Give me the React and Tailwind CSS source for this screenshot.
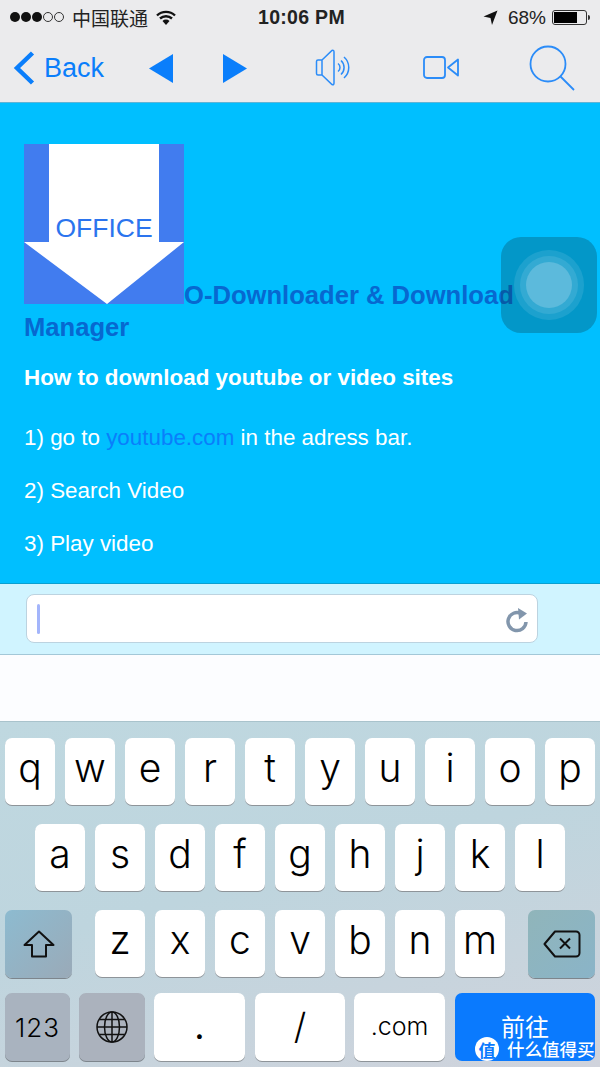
const sans = { fontFamily: '"Liberation Sans", Arial, sans-serif' };
const cjk = { fontFamily: '"Noto Sans CJK SC", sans-serif' };
const keyFont = { fontFamily: 'Inter, sans-serif' };

function Key({ label }) {
  return (
    <div className="flex h-[67px] w-[50px] shrink-0 items-center justify-center rounded-[7px] bg-white pb-2 text-[39px] font-light leading-none text-black shadow-[0_1px_0_#8e9499]" style={keyFont}>
      {label}
    </div>
  );
}

function KeyRow({ keys, className = '' }) {
  return (
    <div className={`flex gap-[10px] ${className}`}>
      {keys.map((k) => (
        <Key key={k} label={k} />
      ))}
    </div>
  );
}

function StatusBar() {
  return (
    <div className="relative flex h-[34px] items-center px-[10px] text-[18px] text-[#222]">
      <div className="flex items-center gap-[1px]">
        {[0, 1, 2].map((i) => (
          <span key={i} className="h-[10px] w-[10px] rounded-full bg-[#111]" />
        ))}
        {[0, 1].map((i) => (
          <span key={i} className="h-[10px] w-[10px] rounded-full border border-[#333]" />
        ))}
      </div>
      <span className="ml-[8px] text-[19px] leading-none" style={cjk}>中国联通</span>
      <svg className="ml-[8px]" width="20" height="15" viewBox="0 0 20 15">
        <path d="M1 5.500a13 13 0 0 1 18 0M4 8.500a9 9 0 0 1 12 0" fill="none" stroke="#111" strokeWidth="2.400" />
        <path d="M6.500 11a5 5 0 0 1 7 0L10 15z" fill="#111" />
      </svg>
      <span className="absolute left-[258px] top-[6px] text-[19.500px] font-bold leading-[22px] tracking-[0.3px]">10:06 PM</span>
      <div className="ml-auto flex items-center">
        <svg width="15" height="15" viewBox="0 0 15 15">
          <path d="M14.500 0.500L0.500 6.500L7.500 8L9 15z" fill="#111" />
        </svg>
        <span className="ml-[10px] text-[19px] leading-none">68%</span>
        <div className="ml-[6px] h-[15px] w-[35px] rounded-[3px] border border-[#333] p-[1px]">
          <div className="h-full w-[23px] bg-black" />
        </div>
        <div className="ml-[1px] h-[5px] w-[2px] rounded-r-sm bg-[#333]" />
      </div>
    </div>
  );
}

function NavBar() {
  return (
    <div className="relative flex h-[69px] items-center border-b border-[#5fb4d6] text-[#0a7efb]">
      <svg className="ml-[13px]" width="22" height="34" viewBox="0 0 22 34">
        <path d="M19.500 2L4 17l15.500 15" fill="none" stroke="#0a7efb" strokeWidth="4.500" />
      </svg>
      <span className="ml-[9px] text-[27px] leading-none">Back</span>
      <svg className="ml-[45px]" width="24" height="29" viewBox="0 0 24 29">
        <path d="M24 0v29L0 14.500z" fill="#0a7efb" />
      </svg>
      <svg className="ml-[50px]" width="24" height="29" viewBox="0 0 24 29">
        <path d="M0 0v29l24-14.500z" fill="#0a7efb" />
      </svg>
      <svg className="ml-[68px]" width="38" height="38" viewBox="0 0 38 38" fill="none" stroke="#2b8cf8" strokeWidth="1.500">
        <path d="M7 11h-4a1.500 1.500 0 0 0-1.500 1.500v12a1.500 1.500 0 0 0 1.500 1.500h4zM7 11L17 1.500q2-.8 2 1.500v31q0 2.300-2 1.500L7 26" />
        <path d="M23 14.500a5 5 0 0 1 0 8M26 11.500a9.500 9.500 0 0 1 0 14M29 8a14 14 0 0 1 0 21" />
      </svg>
      <svg className="ml-[70px]" width="36" height="24" viewBox="0 0 36 24" fill="none" stroke="#2b8cf8" strokeWidth="1.800">
        <rect x="1" y="1" width="21" height="21" rx="3" />
        <path d="M35 3.500v16L25 11.500z" strokeLinejoin="round" />
      </svg>
      <svg className="ml-[70px]" width="46" height="46" viewBox="0 0 46 46" fill="none" stroke="#2b8cf8" strokeWidth="1.800">
        <circle cx="19" cy="19" r="17.500" />
        <path d="M31 31l14 14" />
      </svg>
    </div>
  );
}

function AppLogo() {
  return (
    <svg className="inline-block align-baseline" width="160" height="160" viewBox="0 0 160 160">
      <rect width="160" height="160" fill="#417cef" />
      <path d="M25 0h110v98h25l-77 62L0 98h25z" fill="#fff" />
      <text x="80" y="93" textAnchor="middle" fontSize="26.500" fontWeight="400" fill="#2b74ee" fontFamily="Liberation Sans, sans-serif">OFFICE</text>
    </svg>
  );
}

function Content() {
  return (
    <div className="relative h-[480px] bg-[#00bfff] pl-6 pr-[20px] pt-[41px] text-white">
      <h1 className="text-[25.600px] font-bold leading-[32px] text-[#0768d0]">
        <AppLogo />
        O-Downloader &amp; Download Manager
      </h1>
      <p className="mt-[22px] text-[22.400px] font-bold leading-[26px]">How to download youtube or video sites</p>
      <p className="mt-[34px] text-[22.400px] leading-[26px]">
        1) go to <span className="text-[#0a7efb]">youtube.com</span> in the adress bar.
      </p>
      <p className="mt-[27px] text-[22.400px] leading-[26px]">2) Search Video</p>
      <p className="mt-[27px] text-[22.400px] leading-[26px]">3) Play video</p>
      <div className="absolute left-[501px] top-[134px] flex h-[96px] w-[96px] items-center justify-center rounded-[20px] bg-[#0a3a4a]/30">
        <div className="flex h-[70px] w-[70px] items-center justify-center rounded-full bg-white/10">
          <div className="flex h-[58px] w-[58px] items-center justify-center rounded-full bg-white/10">
            <div className="h-[46px] w-[46px] rounded-full bg-[#5cbadc]" />
          </div>
        </div>
      </div>
    </div>
  );
}

function AddressBar() {
  return (
    <div className="border-t border-[#0a9fd0] border-b border-b-[#a3c8d8] bg-[#d0f4ff] px-[26px] pb-[11px] pt-[10px]">
      <div className="flex h-[49px] w-[512px] items-center justify-between rounded-[8px] border border-[#bcd3e0] bg-white pl-[10px] pr-[9px]">
        <div className="h-[30px] w-[3px] rounded-sm bg-[#a3b5fb]" />
        <svg className="mt-[3px]" width="22" height="25" viewBox="0 0 22 25" fill="none">
          <path d="M15 5.500A9 9 0 1 0 20 14" stroke="#8296ac" strokeWidth="3.500" />
          <path d="M12 0l9 5.500-8 6z" fill="#8296ac" />
        </svg>
      </div>
    </div>
  );
}

function Keyboard() {
  return (
    <div className="relative h-[346px] border-t border-[#a9c3cc] bg-[linear-gradient(165deg,#bfd8e0_0%,#bed5de_45%,#d0d3dc_100%)] pl-[5px] pt-[16px]">
      <KeyRow keys={['q', 'w', 'e', 'r', 't', 'y', 'u', 'i', 'o', 'p']} />
      <KeyRow keys={['a', 's', 'd', 'f', 'g', 'h', 'j', 'k', 'l']} className="ml-[30px] mt-[19px]" />
      <div className="mt-[19px] flex">
        <div className="flex h-[68px] w-[67px] items-center justify-center rounded-[7px] bg-[linear-gradient(135deg,#8dbbd0,#9aaab8)] shadow-[0_1px_0_#7d858c]">
          <svg width="32" height="28" viewBox="0 0 32 28" fill="none">
            <path d="M16 1.500L1.500 15H9v11.500h14V15h7.500z" stroke="#111" strokeWidth="2" strokeLinejoin="round" />
          </svg>
        </div>
        <KeyRow keys={['z', 'x', 'c', 'v', 'b', 'n', 'm']} className="ml-[23px]" />
        <div className="ml-[23px] flex h-[68px] w-[67px] items-center justify-center rounded-[7px] bg-[linear-gradient(135deg,#90b5ba,#8ab4c8)] shadow-[0_1px_0_#7d858c]">
          <svg width="38" height="28" viewBox="0 0 38 28" fill="none" stroke="#111" strokeWidth="2">
            <path d="M12 1.500h21a3.500 3.500 0 0 1 3.500 3.500v18a3.500 3.500 0 0 1-3.500 3.500H12L1.500 14z" strokeLinejoin="round" />
            <path d="M17 8.500l10 10M27 8.500L17 18.500" />
          </svg>
        </div>
      </div>
      <div className="mt-[15px] flex font-light text-black" style={keyFont}>
        <div className="flex h-[68px] w-[65px] items-center justify-center rounded-[7px] bg-[#a9b3bf] text-[26px] tracking-[1px] shadow-[0_1px_0_#7d858c]">123</div>
        <div className="ml-[9px] flex h-[68px] w-[66px] items-center justify-center rounded-[7px] bg-[#abb2bd] shadow-[0_1px_0_#7d858c]">
          <svg width="32" height="32" viewBox="0 0 32 32" fill="none" stroke="#111" strokeWidth="1.500">
            <circle cx="16" cy="16" r="15" />
            <ellipse cx="16" cy="16" rx="7.500" ry="15" />
            <path d="M16 1v30M1 16h30M3.500 8.500h25M3.500 23.500h25" />
          </svg>
        </div>
        <div className="ml-[9px] flex h-[68px] w-[91px] items-center justify-center rounded-[7px] bg-white pb-[2px] text-[36px] font-normal shadow-[0_1px_0_#8e9499]">.</div>
        <div className="ml-[10px] flex h-[68px] w-[90px] items-center justify-center rounded-[7px] bg-white pb-[2px] text-[36px] shadow-[0_1px_0_#8e9499]">/</div>
        <div className="ml-[9px] flex h-[68px] w-[91px] items-center justify-center rounded-[7px] bg-white text-[25px] shadow-[0_1px_0_#8e9499]">.com</div>
        <div className="ml-[10px] flex h-[68px] w-[140px] justify-center rounded-[7px] bg-[#0a7afe] pt-[21px] text-[24px] font-normal leading-none text-white" style={cjk}>前往</div>
      </div>
      {/* watermark over the return key */}
      <div className="absolute left-[475px] top-[315px] flex items-center text-white" style={cjk}>
        <span className="flex h-[24px] w-[24px] items-center justify-center rounded-full bg-white text-[17px] font-bold leading-none text-[#0a7afe]">值</span>
        <span className="ml-[8px] text-[17.500px] font-medium leading-[24px]">什么值得买</span>
      </div>
    </div>
  );
}

export default function App() {
  return (
    <div className="h-[1067px] w-[600px] overflow-hidden bg-[#ebebed]" style={sans}>
      <StatusBar />
      <NavBar />
      <Content />
      <AddressBar />
      <div className="h-[66px] bg-[#fcfdff]" />
      <Keyboard />
    </div>
  );
}
